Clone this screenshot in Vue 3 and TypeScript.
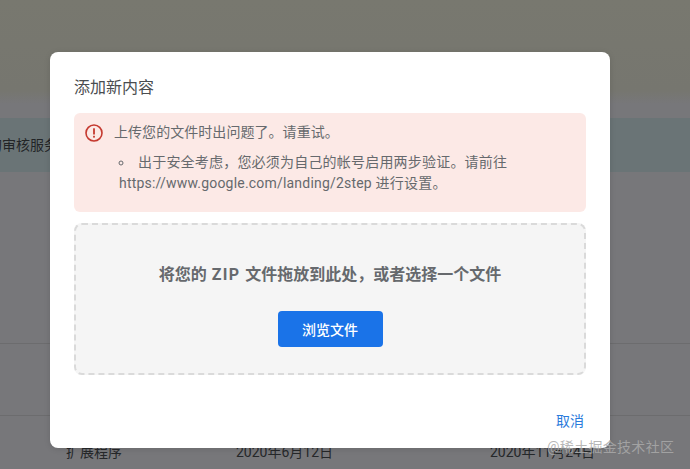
<script setup lang="ts">
const title = '添加新内容'
const errorText = '上传您的文件时出问题了。请重试。'
const detail = '出于安全考虑，您必须为自己的帐号启用两步验证。请前往 https://www.google.com/landing/2step 进行设置。'
</script>

<template>
  <div class="page">
    <div class="backdrop">
      <div class="top"></div>
      <div class="notice"><span class="notice-text">的审核服务</span></div>
      <div class="empty"></div>
      <div class="row first"></div>
      <div class="row last">
        <span class="name">扩展程序</span>
        <span class="date">2020年6月12日</span>
        <span class="date second">2020年11月24日</span>
      </div>
    </div>

    <section class="modal">
      <h2 class="title">{{ title }}</h2>
      <div class="alert">
        <div class="alert-head">
          <svg class="alert-icon" width="20" height="20" viewBox="0 0 20 20" fill="none">
            <circle cx="10" cy="10" r="8" stroke="#c5392f" stroke-width="1.6" />
            <rect x="9.1" y="5.3" width="1.8" height="6.2" fill="#c5392f" />
            <rect x="9.1" y="12.8" width="1.8" height="1.8" fill="#c5392f" />
          </svg>
          <span>{{ errorText }}</span>
        </div>
        <ul class="alert-list">
          <li>{{ detail }}</li>
        </ul>
      </div>
      <div class="drop">
        <p class="drop-text">将您的 <span class="zip">ZIP</span> 文件拖放到此处，或者选择一个文件</p>
        <button class="browse" type="button">浏览文件</button>
      </div>
      <div class="actions">
        <button class="cancel" type="button">取消</button>
      </div>
    </section>

    <span class="watermark">@稀土掘金技术社区</span>
  </div>
</template>

<style>
html, body { margin: 0; padding: 0; }
</style>

<style scoped>
.page {
  position: relative;
  width: 690px;
  height: 469px;
  overflow: hidden;
  font-family: Roboto, "Noto Sans CJK SC", sans-serif;
  background: #77777a;
}
.backdrop { display: flex; flex-direction: column; height: 469px; }
.top {
  height: 118px;
  background: linear-gradient(#78786f 0, #76766f 90px, #77777a 104px, #77777a 116px);
}
.notice {
  height: 54px;
  background: #6a7476;
  display: flex;
  align-items: center;
  color: #222426;
  font-size: 14px;
}
.notice-text { margin-left: -12px; margin-top: -3px; white-space: nowrap; }
.empty { height: 171px; }
.row { border-top: 1px solid #6c6c6e; }
.first { height: 71px; }
.last {
  flex: 1;
  display: flex;
  color: #26282a;
  font-size: 14px;
  padding-top: 26px;
  line-height: 20px;
}
.name { flex: none; margin-left: 66px; width: 170px; }
.date { flex: none; width: 254px; }
.modal {
  position: absolute;
  left: 50px;
  top: 52px;
  width: 560px;
  height: 396px;
  box-sizing: border-box;
  padding: 25px 24px 0;
  background: #fff;
  border-radius: 8px;
  display: flex;
  flex-direction: column;
  box-shadow: 0 1px 6px rgba(0, 0, 0, 0.12);
}
.title {
  margin: 0;
  font-size: 16px;
  font-weight: 400;
  line-height: 22px;
  color: #4a4d50;
}
.alert {
  margin-top: 14px;
  height: 99px;
  box-sizing: border-box;
  background: #fce9e6;
  border-radius: 6px;
  padding: 8px 10px 0 10px;
  font-size: 14px;
  line-height: 20px;
  color: #66696d;
}
.alert-head { display: flex; align-items: center; gap: 10px; letter-spacing: 0.05px; }
.alert-icon { flex: none; margin-top: 2px; }
.alert-list {
  list-style: circle inside;
  margin: 9px 0 0;
  padding: 0 25px 0 35px;
  line-height: 21px;
  letter-spacing: 0.2px;
}
.drop {
  margin-top: 11px;
  height: 152px;
  box-sizing: border-box;
  border: 2px dashed #dadada;
  border-radius: 8px;
  background: #f5f5f5;
  display: flex;
  flex-direction: column;
  align-items: center;
}
.drop-text {
  margin: 38px 0 0;
  font-size: 16px;
  line-height: 24px;
  font-weight: 700;
  word-spacing: 1px;
  color: #66696d;
}
.zip { letter-spacing: 1.3px; }
.browse {
  margin-top: 24px;
  width: 105px;
  height: 36px;
  border: 0;
  border-radius: 4px;
  background: #1a73e8;
  color: #fff;
  font: 500 14px Roboto, "Noto Sans CJK SC", sans-serif;
}
.actions { display: flex; justify-content: flex-end; margin-top: 36px; padding-right: 2px; }
.cancel {
  border: 0;
  padding: 0;
  background: none;
  color: #2a7bdc;
  font: 400 14px/20px Roboto, "Noto Sans CJK SC", sans-serif;
}
.watermark {
  position: absolute;
  left: 547px;
  top: 437px;
  font-size: 14px;
  line-height: 20px;
  letter-spacing: 0.3px;
  white-space: nowrap;
  color: rgba(170, 170, 170, 0.85);
}
</style>
